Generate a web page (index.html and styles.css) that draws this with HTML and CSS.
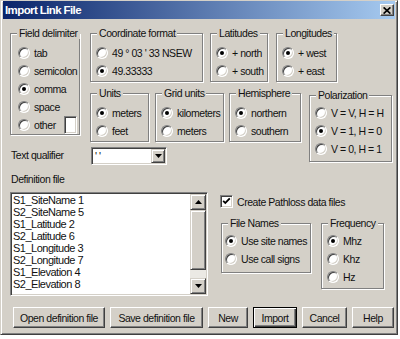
FILE: index.html
```html
<!DOCTYPE html>
<html>
<head>
<meta charset="utf-8">
<title>Import Link File</title>
<link rel="stylesheet" href="styles.css">
</head>
<body>
<div class="window">
  <div class="titlebar">
    <span class="title">Import Link File</span>
    <span class="close"><svg width="8" height="7" viewBox="0 0 8 7"><path d="M0.6 0.4 L7.4 6.6 M7.4 0.4 L0.6 6.6" stroke="#000" stroke-width="1.7" fill="none"/></svg></span>
  </div>
  <div class="content">
    <div class="row-a">
      <div class="col-l">
        <div class="group g-field">
          <div class="legend">Field delimiter</div>
          <div class="opt"><span class="radio"></span>tab</div>
          <div class="opt"><span class="radio"></span>semicolon</div>
          <div class="opt"><span class="radio on"></span>comma</div>
          <div class="opt"><span class="radio"></span>space</div>
          <div class="opt"><span class="radio"></span>other<span class="otherbox"></span></div>
        </div>
        <div class="lbl lbl-tq">Text qualifier</div>
      </div>
      <div class="col-r">
        <div class="row1">
          <div class="group g-coord">
            <div class="legend">Coordinate format</div>
            <div class="opt"><span class="radio"></span>49 ° 03 ' 33 NSEW</div>
            <div class="opt"><span class="radio on"></span>49.33333</div>
          </div>
          <div class="group g-lat">
            <div class="legend">Latitudes</div>
            <div class="opt"><span class="radio on"></span>+ north</div>
            <div class="opt"><span class="radio"></span>+ south</div>
          </div>
          <div class="group g-long">
            <div class="legend">Longitudes</div>
            <div class="opt"><span class="radio on"></span>+ west</div>
            <div class="opt"><span class="radio"></span>+ east</div>
          </div>
        </div>
        <div class="row2">
          <div class="group g-units">
            <div class="legend">Units</div>
            <div class="opt"><span class="radio on"></span>meters</div>
            <div class="opt"><span class="radio"></span>feet</div>
          </div>
          <div class="group g-grid">
            <div class="legend">Grid units</div>
            <div class="opt"><span class="radio on"></span>kilometers</div>
            <div class="opt"><span class="radio"></span>meters</div>
          </div>
          <div class="group g-hemi">
            <div class="legend">Hemisphere</div>
            <div class="opt"><span class="radio on"></span>northern</div>
            <div class="opt"><span class="radio"></span>southern</div>
          </div>
          <div class="group g-pol tight">
            <div class="legend">Polarization</div>
            <div class="opt"><span class="radio"></span>V = V, H = H</div>
            <div class="opt"><span class="radio on"></span>V = 1, H = 0</div>
            <div class="opt"><span class="radio"></span>V = 0, H = 1</div>
          </div>
        </div>
        <div class="combo">
          <span class="combo-text">' '</span>
          <span class="combo-btn"><svg width="7" height="4" viewBox="0 0 7 4"><path d="M0 0H7L3.5 4Z" fill="#000"/></svg></span>
        </div>
      </div>
    </div>
    <div class="lbl lbl-def">Definition file</div>
    <div class="row-b">
      <div class="listbox">
        <div class="items">
          <div>S1_SiteName 1</div>
          <div>S2_SiteName 5</div>
          <div>S1_Latitude 2</div>
          <div>S2_Latitude 6</div>
          <div>S1_Longitude 3</div>
          <div>S2_Longitude 7</div>
          <div>S1_Elevation 4</div>
          <div>S2_Elevation 8</div>
        </div>
        <div class="scrollbar">
          <span class="sb-btn"><svg width="7" height="4" viewBox="0 0 7 4"><path d="M0 4H7L3.5 0Z" fill="#000"/></svg></span>
          <div class="sb-track"><div class="sb-thumb"></div></div>
          <span class="sb-btn"><svg width="7" height="4" viewBox="0 0 7 4"><path d="M0 0H7L3.5 4Z" fill="#000"/></svg></span>
        </div>
      </div>
      <div class="col-opts">
        <div class="check-row">
          <span class="checkbox"><svg width="9" height="9" viewBox="0 0 9 9"><path d="M1.2 3.8 L3.3 6 L7.8 1.4" stroke="#000" stroke-width="1.8" fill="none"/></svg></span>
          Create Pathloss data files
        </div>
        <div class="row3">
          <div class="group g-fn tight">
            <div class="legend">File Names</div>
            <div class="opt"><span class="radio on"></span>Use site names</div>
            <div class="opt"><span class="radio"></span>Use call signs</div>
          </div>
          <div class="group g-freq tight">
            <div class="legend">Frequency</div>
            <div class="opt"><span class="radio on"></span>Mhz</div>
            <div class="opt"><span class="radio"></span>Khz</div>
            <div class="opt"><span class="radio"></span>Hz</div>
          </div>
        </div>
      </div>
    </div>
    <div class="buttons">
      <span class="btn b-open">Open definition file</span>
      <span class="btn b-save">Save definition file</span>
      <span class="btn b-new">New</span>
      <span class="btn b-import default">Import</span>
      <span class="btn b-cancel">Cancel</span>
      <span class="btn b-help">Help</span>
    </div>
  </div>
</div>
</body>
</html>
```
FILE: styles.css
```css
* { box-sizing: border-box; }

body {
  margin: 0;
  background: #fff;
  font-family: "Liberation Sans", Arial, sans-serif;
  font-size: 10.5px;
  line-height: 12px;
  letter-spacing: -0.45px;
  color: #111;
}

.window {
  width: 398px;
  height: 335px;
  background: #d4d0c8;
  border: 1px solid;
  border-color: #d4d0c8 #404040 #404040 #d4d0c8;
  box-shadow: inset 1px 1px 0 #fff, inset -1px -1px 0 #808080;
  padding: 0 2px 2px 2px;
}

.titlebar {
  height: 18px;
  display: flex;
  align-items: center;
  background: linear-gradient(to right, #0a246a, #a6caf0);
  padding: 0 1px 0 2px;
}

.title {
  flex: 1;
  color: #fff;
  font-weight: bold;
  font-size: 11.5px;
  letter-spacing: -0.6px;
}

.close {
  width: 14px;
  height: 12px;
  display: flex;
  align-items: center;
  justify-content: center;
  background: #d4d0c8;
  border: 1px solid;
  border-color: #fff #404040 #404040 #fff;
  box-shadow: inset -1px -1px 0 #808080;
}

.content {
  padding-left: 7px;
}

.row-a {
  display: flex;
  margin-top: 14px;
  height: 132px;
}

.col-l { width: 70px; flex: none; }
.col-r { margin-left: 10px; }

.row1, .row2, .row3 {
  display: flex;
  align-items: flex-start;
}

.row2 {
  margin-top: 11px;
  height: 49px;
}

/* group boxes */
.group {
  border: 1px solid #808080;
  box-shadow: 1px 1px 0 #fff, inset 1px 1px 0 #fff;
  flex: none;
}

.legend {
  width: max-content;
  height: 12px;
  margin: -7px 0 5px 6px;
  padding: 0 2px;
  background: #d4d0c8;
  white-space: nowrap;
}

.tight .legend { margin-bottom: 3px; }

.opt {
  display: flex;
  align-items: center;
  height: 18px;
  padding-left: 5px;
  white-space: nowrap;
}

.radio {
  flex: none;
  width: 12px;
  height: 12px;
  margin-right: 4px;
  border-radius: 50%;
  border: 1px solid;
  border-color: #808080 #fff #fff #808080;
  background: #fff;
  box-shadow: inset 1px 1px 0 #404040, inset -1px -1px 0 #d4d0c8;
  display: flex;
  align-items: center;
  justify-content: center;
}

.radio.on::after {
  content: "";
  width: 4px;
  height: 4px;
  border-radius: 50%;
  background: #000;
}

.otherbox, .combo, .listbox, .checkbox {
  background: #fff;
  border: 1px solid;
  border-color: #808080 #fff #fff #808080;
  box-shadow: inset 1px 1px 0 #404040, inset -1px -1px 0 #d4d0c8;
}

.g-field { width: 70px; height: 102px; }
.g-field .opt { padding-left: 7px; padding-right: 2px; }
.otherbox {
  width: 13px;
  height: 18px;
  margin-left: auto;
}

.g-coord { width: 113px; height: 49px; }
.g-lat { width: 58px; height: 49px; margin-left: 7px; }
.g-long { width: 61px; height: 49px; margin-left: 8px; }

.g-units { width: 59px; height: 49px; }
.g-grid { width: 69px; height: 49px; margin-left: 6px; }
.g-hemi { width: 72px; height: 49px; margin-left: 5px; }
.g-pol { width: 83px; height: 67px; margin-left: 8px; margin-top: 2px; }

.lbl { margin-left: 1px; height: 12px; white-space: nowrap; }
.lbl-tq { margin-top: 14px; }
.lbl-def { margin-top: 8px; }

.combo {
  width: 76px;
  height: 18px;
  margin: 5px 0 0 1px;
  display: flex;
  align-items: center;
}

.combo-text { padding-left: 3px; }

.combo-btn {
  margin-left: auto;
  margin-right: 1px;
  width: 14px;
  height: 14px;
  display: flex;
  align-items: center;
  justify-content: center;
  background: #d4d0c8;
  border: 1px solid;
  border-color: #d4d0c8 #404040 #404040 #d4d0c8;
  box-shadow: inset 1px 1px 0 #fff, inset -1px -1px 0 #808080;
}

.row-b {
  display: flex;
  margin-top: 7px;
  height: 104px;
}

.listbox {
  width: 198px;
  height: 104px;
  display: flex;
  flex: none;
}

.items {
  flex: 1;
  padding: 1px 0 0 2px;
  white-space: nowrap;
  font-size: 11px;
  letter-spacing: -0.5px;
}

.scrollbar {
  width: 16px;
  margin: 1px 1px 1px 0;
  display: flex;
  flex-direction: column;
}

.sb-btn, .sb-thumb {
  background: #d4d0c8;
  border: 1px solid;
  border-color: #d4d0c8 #404040 #404040 #d4d0c8;
  box-shadow: inset 1px 1px 0 #fff, inset -1px -1px 0 #808080;
}

.sb-btn {
  height: 16px;
  display: flex;
  align-items: center;
  justify-content: center;
  flex: none;
}

.sb-track {
  flex: 1;
  background: #ebe9e4;
}

.sb-thumb { height: 60px; }

.col-opts { margin-left: 12px; }

.check-row {
  display: flex;
  align-items: center;
  height: 13px;
  margin-top: 3px;
  white-space: nowrap;
}

.checkbox {
  width: 13px;
  height: 13px;
  margin-right: 4px;
  display: flex;
  align-items: center;
  justify-content: center;
  flex: none;
}

.row3 { margin-top: 15px; }

.g-fn { width: 90px; height: 50px; margin-left: 1px; }
.g-fn .opt { padding-left: 3px; }
.g-freq { width: 63px; height: 66px; margin-left: 10px; }

.buttons {
  display: flex;
  margin-top: 11px;
  padding-left: 3px;
  gap: 5px;
}

.btn {
  height: 21px;
  display: flex;
  align-items: center;
  justify-content: center;
  white-space: nowrap;
  background: #d4d0c8;
  border: 1px solid;
  border-color: #fff #404040 #404040 #fff;
  box-shadow: inset -1px -1px 0 #808080;
}

.btn.default {
  border-color: #000;
  box-shadow: inset 1px 1px 0 #fff, inset -1px -1px 0 #404040, inset -2px -2px 0 #808080;
}

.b-open { width: 92px; }
.b-save { width: 93px; }
.b-new { width: 40px; }
.b-import { width: 44px; }
.b-cancel { width: 45px; }
.b-help { width: 42px; }
```
